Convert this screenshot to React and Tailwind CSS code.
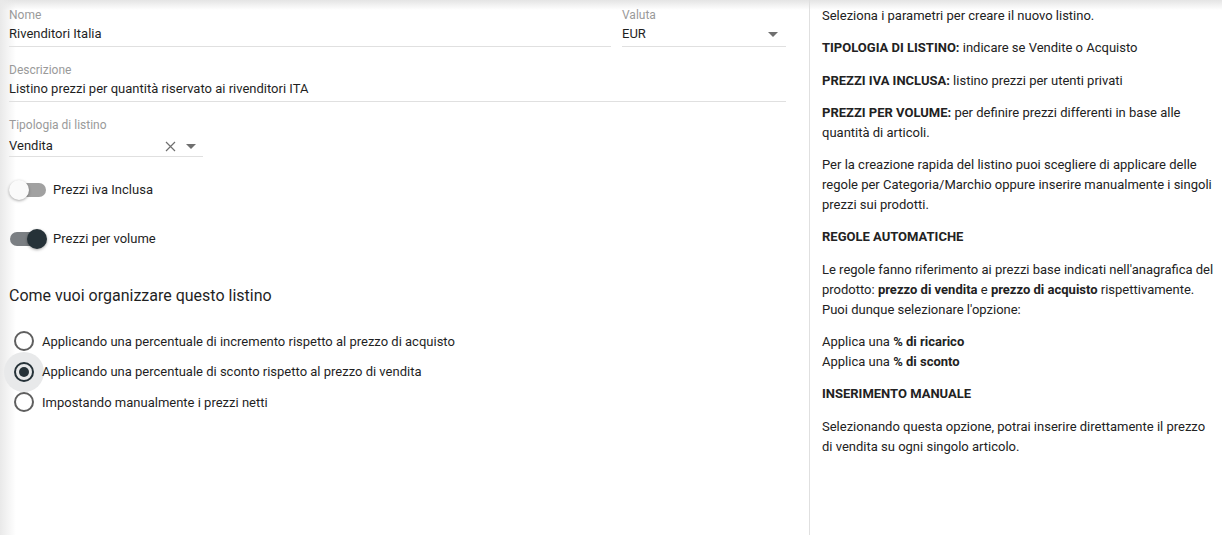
import { useState } from "react";

const font = { fontFamily: "Roboto, 'Noto Sans', Arial, sans-serif" };

function Field({ label, value, className = "", children }) {
  return (
    <div className={className}>
      <div className="text-[12px] leading-4 text-[#9a9a9a]">{label}</div>
      <div className="mt-px flex items-center h-[23px] pb-[2px] border-b border-[#e0e0e0] text-[13px] text-[#1f1f1f]">
        <span className="flex-1 truncate">{value}</span>
        {children}
      </div>
    </div>
  );
}

function Caret() {
  return (
    <svg width="10" height="5" viewBox="0 0 10 5" className="text-[#6f6f6f]">
      <path d="M0 0 L10 0 L5 5 Z" fill="currentColor" />
    </svg>
  );
}

function Toggle({ on, label }) {
  return (
    <div className="flex items-center h-6">
      <div className="relative w-9 h-[14px] ml-px">
        <div
          className={`absolute inset-0 rounded-full ${on ? "bg-[#7b7f83]" : "bg-[#a1a1a1]"}`}
        />
        <div
          className={`absolute top-1/2 -translate-y-1/2 w-5 h-5 rounded-full shadow-[0_1px_3px_rgba(0,0,0,0.35)] ${
            on ? "left-[17px] bg-[#263238]" : "-left-px bg-[#fafafa]"
          }`}
        />
      </div>
      <span className="ml-[7px] text-[13px] text-[#1f1f1f]">{label}</span>
    </div>
  );
}

function Radio({ checked, label, onClick }) {
  return (
    <div className="flex items-center h-[30.5px] cursor-pointer" onClick={onClick}>
      <div className="relative w-5 h-5 ml-[5px] shrink-0">
        {checked && (
          <div className="absolute -inset-[10px] rounded-full bg-[#e8e9ea]" />
        )}
        <div
          className={`absolute inset-0 rounded-full border-2 ${
            checked ? "border-[#263238]" : "border-[#5f5f5f]"
          }`}
        />
        {checked && (
          <div className="absolute inset-[5px] rounded-full bg-[#263238]" />
        )}
      </div>
      <span className="relative ml-[8px] text-[13px] text-[#1f1f1f]">{label}</span>
    </div>
  );
}

export default function App() {
  const [mode, setMode] = useState(1);

  const options = [
    "Applicando una percentuale di incremento rispetto al prezzo di acquisto",
    "Applicando una percentuale di sconto rispetto al prezzo di vendita",
    "Impostando manualmente i prezzi netti",
  ];

  return (
    <div
      style={font}
      className="relative flex h-[535px] w-full bg-white overflow-hidden"
    >
      {/* shadows */}
      <div className="pointer-events-none absolute inset-x-0 top-0 h-[10px] bg-gradient-to-b from-[#e4e4e4] to-transparent" />
      <div className="pointer-events-none absolute inset-y-0 left-0 w-[16px] bg-gradient-to-r from-[#e9e9e9] to-transparent" />

      {/* Left form */}
      <div className="relative w-[810px] shrink-0 border-r border-[#e0e0e0] pl-[9px] pr-[23px] pt-[7px]">
        <div className="flex gap-[11px]">
          <Field label="Nome" value="Rivenditori Italia" className="w-[602px]" />
          <Field label="Valuta" value="EUR" className="w-[164px]">
            <span className="mr-[8px]">
              <Caret />
            </span>
          </Field>
        </div>

        <Field
          label="Descrizione"
          value="Listino prezzi per quantità riservato ai rivenditori ITA"
          className="mt-[15px]"
        />

        <div className="mt-[15px] w-[194px]">
          <div className="text-[12px] leading-4 text-[#9a9a9a]">Tipologia di listino</div>
          <div className="mt-[3px] flex items-center h-[21px] border-b border-[#e0e0e0] text-[13px] text-[#1f1f1f]">
            <span className="flex-1">Vendita</span>
            <svg width="11" height="11" viewBox="0 0 11 11" className="mr-[10px] text-[#6f6f6f]">
              <path d="M1 1 L10 10 M10 1 L1 10" stroke="currentColor" strokeWidth="1.2" />
            </svg>
            <span className="mr-[7px]">
              <Caret />
            </span>
          </div>
        </div>

        <div className="mt-[21px]">
          <Toggle on={false} label="Prezzi iva Inclusa" />
        </div>
        <div className="mt-[25px]">
          <Toggle on label="Prezzi per volume" />
        </div>

        <h2 className="mt-[33px] text-[16px] leading-6 text-[#1f1f1f]">
          Come vuoi organizzare questo listino
        </h2>

        <div className="mt-[18px]">
          {options.map((o, i) => (
            <Radio key={i} checked={mode === i} label={o} onClick={() => setMode(i)} />
          ))}
        </div>
      </div>

      {/* Right help */}
      <div className="relative flex-1 pl-[12px] pr-[6px] pt-[6px] text-[13px] leading-5 text-[#222]">
        <p>Seleziona i parametri per creare il nuovo listino.</p>
        <p className="mt-[12.3px]">
          <b className="font-bold">TIPOLOGIA DI LISTINO:</b> indicare se Vendite o Acquisto
        </p>
        <p className="mt-[12.3px]">
          <b className="font-bold">PREZZI IVA INCLUSA:</b> listino prezzi per utenti privati
        </p>
        <p className="mt-[12.3px]">
          <b className="font-bold">PREZZI PER VOLUME:</b> per definire prezzi differenti in base alle
          quantità di articoli.
        </p>
        <p className="mt-[12.3px]">
          Per la creazione rapida del listino puoi scegliere di applicare delle regole per
          Categoria/Marchio oppure inserire manualmente i singoli prezzi sui prodotti.
        </p>
        <p className="mt-[12.3px] font-bold">REGOLE AUTOMATICHE</p>
        <p className="mt-[12.3px]">
          Le regole fanno riferimento ai prezzi base indicati nell'anagrafica del prodotto:{" "}
          <b className="font-bold">prezzo di vendita</b> e{" "}
          <b className="font-bold">prezzo di acquisto</b> rispettivamente. Puoi dunque selezionare
          l'opzione:
        </p>
        <p className="mt-[12.3px]">
          Applica una <b className="font-bold">% di ricarico</b>
          <br />
          Applica una <b className="font-bold">% di sconto</b>
        </p>
        <p className="mt-[12.3px] font-bold">INSERIMENTO MANUALE</p>
        <p className="mt-[12.3px]">
          Selezionando questa opzione, potrai inserire direttamente il prezzo di vendita su ogni
          singolo articolo.
        </p>
      </div>
    </div>
  );
}
